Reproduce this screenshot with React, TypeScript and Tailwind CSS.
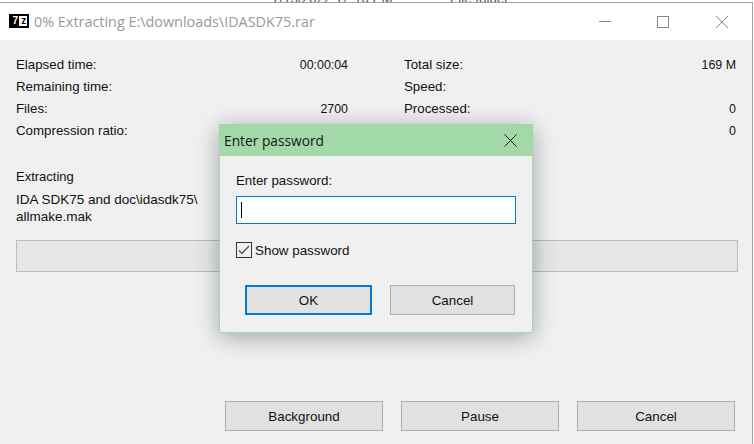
const ui = "font-['Liberation_Sans',Arial,sans-serif]";

function Row({ label, value }: { label: string; value?: string }) {
  return (
    <div className="flex h-[22px] items-center justify-between">
      <span className="text-[13.3px]">{label}</span>
      <span className="text-[12.4px]">{value}</span>
    </div>
  );
}

function Button({ label, primary }: { label: string; primary?: boolean }) {
  return (
    <div
      className={`flex h-[30px] flex-1 items-center justify-center bg-[#e1e1e1] pt-[3px] text-[13.4px] ${
        primary ? "border-2 border-[#0078d7]" : "border border-[#adadad]"
      }`}
    >
      {label}
    </div>
  );
}

function PasswordDialog() {
  return (
    <div className="absolute left-[219px] top-[124px] w-[314px] border border-[#a3d9a9] bg-[#f0f0f0] shadow-[0_4px_22px_rgba(0,0,0,0.32)]">
      <div className="flex h-[31px] items-center justify-between bg-[#a3d9a9] pl-1 pr-[15px]">
        <span className="pt-[2px] font-['Open_Sans',sans-serif] text-[13.75px] text-[#10200f]">Enter password</span>
        <svg width="13" height="13" viewBox="0 0 13 13" stroke="#111" fill="none">
          <path d="M.5.5l12 12M12.5.5l-12 12" />
        </svg>
      </div>
      <div className="px-4 pt-[15px] pb-[17px]">
        <div className="h-[25px] text-[13.3px]">Enter password:</div>
        <div className="flex h-[28px] w-[280px] items-center border border-[#0078d7] bg-white pl-[4px]">
          <div className="h-[16px] w-px bg-black" />
        </div>
        <div className="mt-[18px] flex h-[16px] items-center gap-[3px]">
          <div className="flex h-4 w-4 items-center justify-center border border-[#333] bg-[#f0f0f0]">
            <svg width="12" height="10" viewBox="0 0 12 10" stroke="#555" strokeWidth="1.4" fill="none">
              <path d="M1 5.5l3 3 7-7.5" />
            </svg>
          </div>
          <span className="pt-[2px] text-[13.4px]">Show password</span>
        </div>
        <div className="mt-[27px] ml-[9px] flex w-[270px] gap-[18px]">
          <Button label="OK" primary />
          <Button label="Cancel" />
        </div>
      </div>
    </div>
  );
}

export default function App() {
  return (
    <div className={`${ui} relative h-[444px] w-[754px] overflow-hidden bg-white text-[13px] text-[#111]`}>
      <div className="relative mr-px h-[3px] overflow-hidden border-b border-[#a0a0a0] bg-white text-[13.4px] text-[#555]">
        <div className="absolute -top-[11px] left-[272px] flex whitespace-nowrap">
          <span className="w-[178px]">7/13/2022 12:16 PM</span>
          <span>File folder</span>
        </div>
      </div>
      <div className="mr-px border-r border-[#a0a0a0]">
        <div className="flex h-[37px] items-center justify-between bg-white pl-[9px]">
          <div className="flex items-center gap-[5px]">
            <div className="flex h-[14px] w-[20px] items-center gap-px border-2 border-black bg-white font-bold">
              <span className="flex h-[10px] w-[9px] items-center justify-center bg-black text-[10px] leading-none text-white">7</span>
              <span className="flex h-[10px] w-[7px] items-center justify-center text-[10px] leading-none text-black">z</span>
            </div>
            <span className="font-['Open_Sans',sans-serif] text-[14.4px] text-[#999]">0% Extracting E:\downloads\IDASDK75.rar</span>
          </div>
          <div className="flex items-center gap-[46px] pr-[23px]">
            <div className="h-px w-[12px] bg-[#888]" />
            <div className="h-[12px] w-[12px] border border-[#888]" />
            <svg width="14" height="14" viewBox="0 0 14 14" stroke="#888" fill="none">
              <path d="M1 1l12 12M13 1L1 13" />
            </svg>
          </div>
        </div>
        <div className="flex h-[404px] flex-col bg-[#f0f0f0] px-4 pt-[14px]">
          <div className="flex gap-[56px]">
            <div className="w-[332px]">
              <Row label="Elapsed time:" value="00:00:04" />
              <Row label="Remaining time:" />
              <Row label="Files:" value="2700" />
              <Row label="Compression ratio:" />
            </div>
            <div className="w-[332px]">
              <Row label="Total size:" value="169 M" />
              <Row label="Speed:" />
              <Row label="Processed:" value="0" />
              <Row label="" value="0" />
            </div>
          </div>
          <div className="mt-[25px]">Extracting</div>
          <div className="mt-[4px] text-[13.5px] leading-[17px]">
            IDA SDK75 and doc\idasdk75\
            <br />
            allmake.mak
          </div>
          <div className="mt-[15px] h-[32px] w-[722px] border border-[#bcbcbc] bg-[#e6e6e6]" />
          <div className="mt-auto mb-[13px] ml-[209px] flex w-[510px] gap-[18px]">
            <Button label="Background" />
            <Button label="Pause" />
            <Button label="Cancel" />
          </div>
        </div>
      </div>
      <PasswordDialog />
    </div>
  );
}
